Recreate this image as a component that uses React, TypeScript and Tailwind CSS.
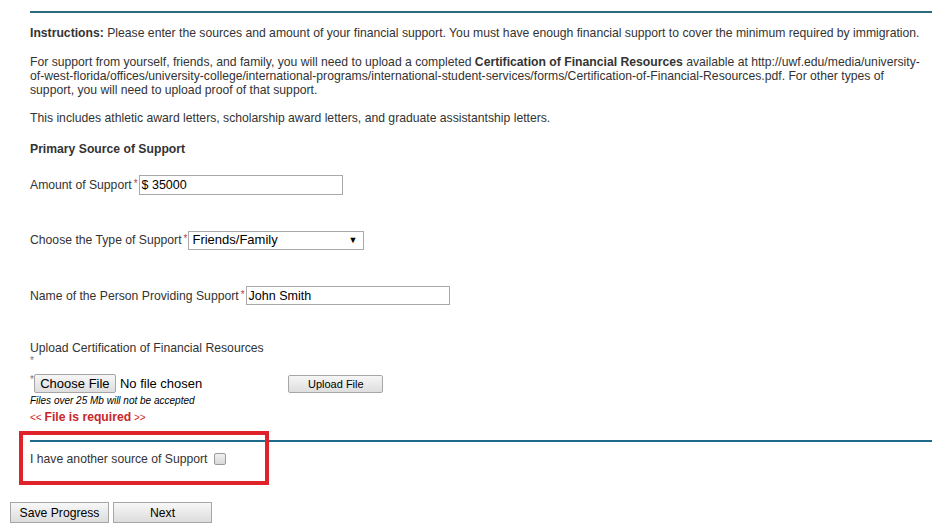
import React from 'react'

const Req = () => <span className="text-[10px] text-[#b0413e] align-top leading-none relative top-[-1px] pl-[2px] pr-[1px]">*</span>

export default function App() {
  return (
    <div
      className="relative w-[946px] h-[528px] bg-white text-[#333] text-[12.2px] leading-[14px] overflow-hidden"
      style={{ fontFamily: '"Liberation Sans", Arial, sans-serif' }}
    >
      <div className="pl-[30px] pr-[14px] pt-[11px]">
        <div className="h-[2px] bg-[#2c6a7e]" />

        <p className="mt-[13px]">
          <b>Instructions:</b> Please enter the sources and amount of your financial support. You must have enough financial support to cover the minimum required by immigration.
        </p>

        <p className="mt-[15px]">
          For support from yourself, friends, and family, you will need to upload a completed <b>Certification of Financial Resources</b> available at http://uwf.edu/media/university-
          <br />
          of-west-florida/offices/university-college/international-programs/international-student-services/forms/Certification-of-Financial-Resources.pdf. For other types of
          <br />
          support, you will need to upload proof of that support.
        </p>

        <p className="mt-[14px]">This includes athletic award letters, scholarship award letters, and graduate assistantship letters.</p>

        <p className="mt-[17px] font-bold">Primary Source of Support</p>

        {/* amount */}
        <div className="mt-[19px] flex items-center h-[20px]">
          <span>Amount of Support</span>
          <Req />
          <div className="w-[204px] h-[20px] border border-[#a9a9a9] flex items-center pl-[2px] text-[12.5px] text-black">$ 35000</div>
        </div>

        {/* type */}
        <div className="mt-[36px] flex items-center h-[18px]">
          <span>Choose the Type of Support</span>
          <Req />
          <div className="w-[176px] h-[19px] border border-[#a9a9a9] flex items-center justify-between pl-[3px] pr-[6px] text-[13px] text-black">
            <span>Friends/Family</span>
            <span className="text-[9px] leading-none">▼</span>
          </div>
        </div>

        {/* name */}
        <div className="mt-[37px] flex items-center h-[19px]">
          <span>Name of the Person Providing Support</span>
          <Req />
          <div className="w-[204px] h-[19px] border border-[#a9a9a9] flex items-center pl-[2px] text-[12.5px] text-black">John Smith</div>
        </div>

        {/* upload */}
        <p className="mt-[36px]">Upload Certification of Financial Resources</p>
        <div className="h-[12px] text-[10px] leading-[12px] text-[#777]">*</div>
        <div className="mt-[7px] flex items-center h-[19px]">
          <span className="text-[10px] text-[#777] self-start leading-none mt-[1px]">*</span>
          <div className="w-[82px] h-[19px] border border-[#a6a6a6] rounded-[2px] bg-gradient-to-b from-[#f6f6f6] to-[#dedede] flex items-center justify-center text-[13px] text-black">
            Choose File
          </div>
          <span className="ml-[4px] text-[13px] text-black">No file chosen</span>
          <div className="ml-[86px] w-[95px] h-[18px] border border-[#a6a6a6] rounded-[2px] bg-gradient-to-b from-[#f6f6f6] to-[#dedede] flex items-center justify-center text-[11px] text-black">
            Upload File
          </div>
        </div>
        <p className="mt-[2px] text-[10px] leading-[12px] italic text-black">Files over 25 Mb will not be accepted</p>
        <p className="mt-[3px] h-[15px] leading-[15px] text-[#c8262c]">
          <span className="text-[10px]">&lt;&lt; </span>
          <span className="font-bold text-[12.2px]">File is required</span>
          <span className="text-[10px]"> &gt;&gt;</span>
        </p>

        <div className="mt-[15px] h-[2px] bg-[#1f6a8a]" />

        <div className="mt-[10px] flex items-center h-[14px]">
          <span>I have another source of Support</span>
          <span className="ml-[6px] w-[12px] h-[12px] rounded-[2px] border border-[#9a9a9a] bg-gradient-to-b from-[#f0f0f0] to-[#d8d8d8]" />
        </div>
      </div>

      <div className="mt-[36px] pl-[10px] flex gap-[4px]">
        <div className="w-[99px] h-[21px] border border-[#a6a6a6] bg-gradient-to-b from-[#f8f8f8] to-[#dcdcdc] flex items-center justify-center text-[12.2px] text-black">
          Save Progress
        </div>
        <div className="w-[99px] h-[21px] border border-[#a6a6a6] bg-gradient-to-b from-[#f8f8f8] to-[#dcdcdc] flex items-center justify-center text-[12.2px] text-black">
          Next
        </div>
      </div>

      {/* annotation box */}
      <div className="absolute left-[19px] top-[431px] w-[250px] h-[54px] border-4 border-[#e0232b]" />
    </div>
  )
}
